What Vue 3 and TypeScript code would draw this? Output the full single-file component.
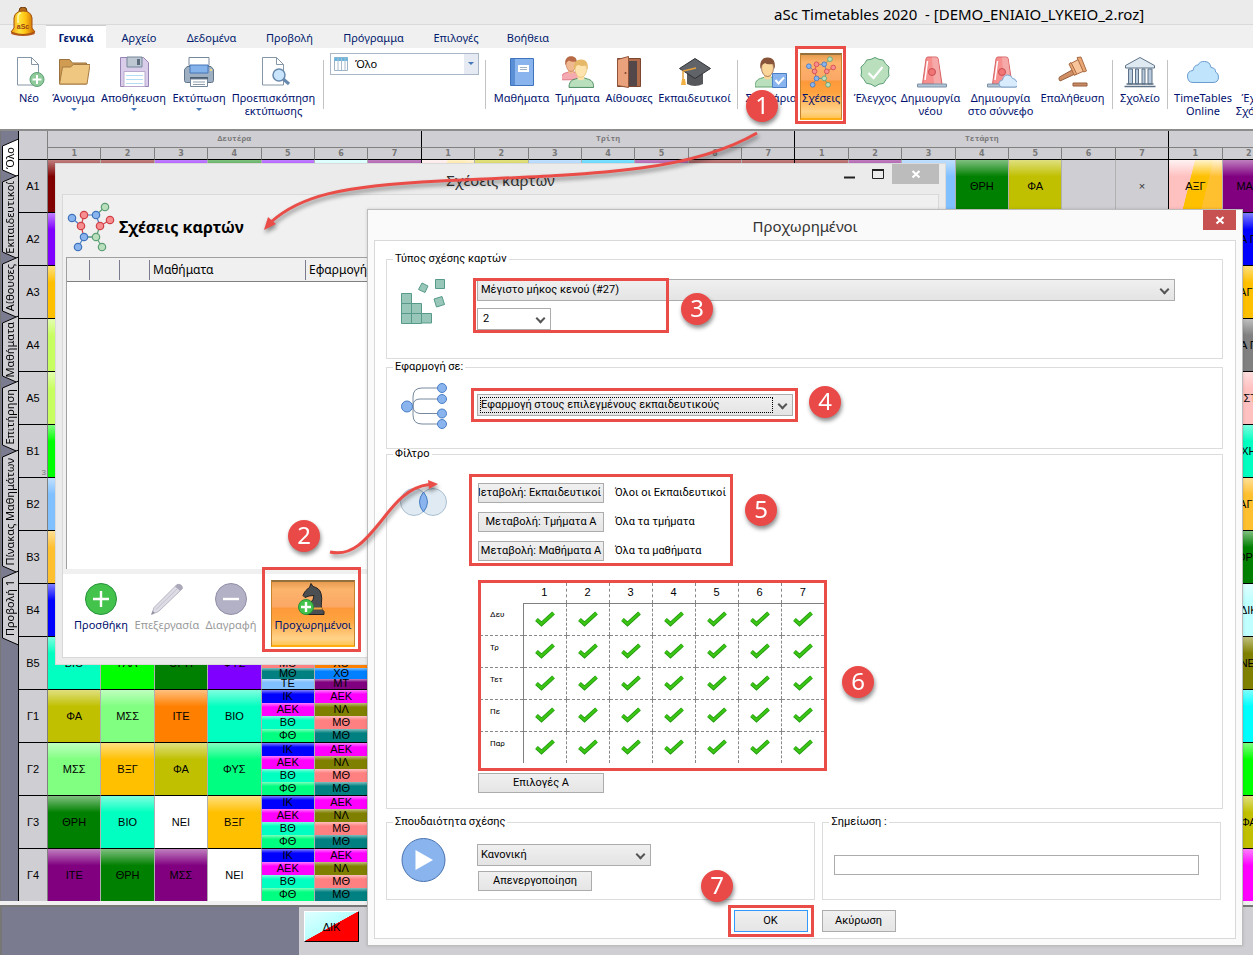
<script setup lang="ts">
import { ref } from 'vue'

type Cell = { t?: string; c?: string; split?: boolean; lines?: [string, string][] }

const palette: Record<string, string> = {
  maroon: '#800000', violet: '#8000ff', green: '#008000', purple: '#800080', gold: '#ffc000',
  olive: '#c0c000', sky: '#80c0ff', cyan: '#00c0ff', ice: '#c0ffff', white: '#ffffff',
  blue: '#0000ff', lime: '#00ff00', mint: '#00ffc0', spring: '#00ff80', pale: '#80ff80',
  orange: '#ff8000', magenta: '#ff00ff', drab: '#808000', salmon: '#ff8080', teal: '#008080',
  azure: '#0080ff', amber: '#ffc030', grass: '#c8ff60', grey: '#808080', pink: '#ffc0c0', aqua: '#00ffff',
}

const menu = ['Γενικά', 'Αρχείο', 'Δεδομένα', 'Προβολή', 'Πρόγραμμα', 'Επιλογές', 'Βοήθεια']

const sideTabs = [
  { label: 'Όλο', h: 36 },
  { label: 'Εκπαιδευτικοί', h: 82 },
  { label: 'Αίθουσες', h: 59 },
  { label: 'Μαθήματα', h: 65 },
  { label: 'Επιτήρηση', h: 69 },
  { label: 'Πίνακας Μαθημάτων', h: 121 },
  { label: 'Προβολή 1', h: 72 },
]

const c = (c?: string, t?: string): Cell => ({ c, t })
const ik: Cell = { lines: [['ΙΚ', 'blue'], ['ΑΕΚ', 'magenta'], ['ΒΘ', 'mint'], ['ΦΘ', 'spring']] }
const aek: Cell = { lines: [['ΑΕΚ', 'magenta'], ['ΝΛ', 'drab'], ['ΜΘ', 'salmon'], ['ΜΘ', 'teal']] }

function row(label: string, start: Cell[], end: Cell[], note = '') {
  const fill: Cell[] = Array.from({ length: 21 - start.length }, () => ({}))
  return { label, note, cells: [...start, ...fill, ...end] }
}

const rows = [
  row('Α1', [
    c('maroon'), c('maroon'), c('violet'), c('green'), c('violet'), c('ice'), c('purple'),
    { split: true }, c('olive'), c('sky'), c('cyan'), c('purple'), c('maroon'), c('maroon'),
    c('maroon'), c('purple'), c('sky'), c('green', 'ΘΡΗ'), c('olive', 'ΦΑ'), {}, { t: '×' },
  ], [{ split: true, t: 'ΑΞΓ' }, c('purple', 'ΜΑΘ')]),
  row('Α2', [c('violet')], [{}, c('blue', 'Α Π')]),
  row('Α3', [c('gold')], [{}, c('gold', 'ΑΓΓ')]),
  row('Α4', [c('grass')], [{}, c('grey', 'Α Π')]),
  row('Α5', [c('grass')], [{}, c('pink', 'ΙΣΤ')]),
  row('Β1', [c('lime')], [{}, c('mint', 'ΧΗ')], '3'),
  row('Β2', [c('sky')], [{}, c('amber', 'ΑΓΓ')]),
  row('Β3', [c('amber')], [{}, c('green', 'ΘΡΗ')]),
  row('Β4', [c('blue')], [{}, c('ice', 'ΔΙΚ')]),
  row('Β5', [
    c('mint', 'ΒΙΟ'), c('lime', 'ΓΛΛ'), c('green', 'ΘΡΗ'), c('violet', 'ΦΥΣ'),
    { lines: [['', 'blue'], ['', 'magenta'], ['ΜΘ', 'salmon'], ['ΜΘ', 'teal'], ['ΤΕ', 'sky']] },
    { lines: [['', 'magenta'], ['', 'drab'], ['ΧΘ', 'orange'], ['ΧΘ', 'azure'], ['ΜΤ', 'purple']] },
  ], [{}, c('drab', 'ΝΕΙ')]),
  row('Γ1', [c('olive', 'ΦΑ'), c('pale', 'ΜΣΣ'), c('orange', 'ΙΤΕ'), c('mint', 'ΒΙΟ'), ik, aek], [{}, c('aqua')]),
  row('Γ2', [c('pale', 'ΜΣΣ'), c('gold', 'ΒΞΓ'), c('olive', 'ΦΑ'), c('spring', 'ΦΥΣ'), ik, aek], [{}, c('lime')]),
  row('Γ3', [c('green', 'ΘΡΗ'), c('mint', 'ΒΙΟ'), c('white', 'ΝΕΙ'), c('gold', 'ΒΞΓ'), ik, aek], [{}, c('olive', 'ΦΑ')]),
  row('Γ4', [c('purple', 'ΙΤΕ'), c('green', 'ΘΡΗ'), c('purple', 'ΜΣΣ'), c('white', 'ΝΕΙ'), ik, aek], [{}, c('magenta')]),
]
const periods = [1, 2, 3, 4, 5, 6, 7, 1, 2, 3, 4, 5, 6, 7, 1, 2, 3, 4, 5, 6, 7, 1, 2]
const days = ['Δευ', 'Τρ', 'Τετ', 'Πε', 'Παρ']

const person = (x: number, hair: string, skin: string, shirt: string, edge: string) =>
  `<g transform="translate(${x} 0)"><path d="M0 31c0-5 2-8 7-9l3-1 6 0 3 1c5 1 7 4 7 9z" fill="${shirt}" stroke="${edge}"/><path d="M9 18h7v4q-3.500 3-7 0z" fill="${skin}"/><ellipse cx="12.500" cy="12" rx="6" ry="8.500" fill="${skin}" stroke="${hair}" stroke-width=".7"/><path d="M5.500 13C4 5 8 1 13 1.500c5 0 8 4 6.500 11.500l-1.500-5q-6 1-8-1l-3 2z" fill="${hair}"/></g>`

const siren = `<path d="M7.500 28 11 3q.3-2 2-2h8q2 0 2.200 2L27 28z" fill="#f78f8f" stroke="#d66466"/><path d="M17 1.500h4q1.700 0 2 2L26 28h-7z" fill="#f5a9a9"/><path d="m10 24 2.500-19" stroke="#fff" stroke-width="1.500"/><circle cx="17" cy="16" r="3.500" fill="#f17575" stroke="#c84f52"/><path d="M2.500 28h29v3h-29z" fill="#b2c4d5" stroke="#7f94a8"/>`
const molecule = `<g stroke-width="1.200" fill="none"><path d="M72 215l9 8M84 212h12l4 11M84 234h12" stroke="#4a7fc5"/><path d="M96 212l9-8M84 234h12l6 10M96 234l4-11" stroke="#5c9f75"/><path d="M84 212l-3 11 3 11M100 223l10-6" stroke="#d0474c"/><path d="M84 234l-6 10" stroke="#4a7fc5"/><g fill="#8ab4ee" stroke="#3f73bd"><circle cx="72" cy="215" r="3.700"/><circle cx="96" cy="212" r="3.700"/><circle cx="84" cy="234" r="3.700"/><circle cx="78" cy="244" r="3.700"/></g><g fill="#f78f90" stroke="#cf4046"><circle cx="84" cy="212" r="3.700"/><circle cx="81" cy="223" r="3.700"/><circle cx="100" cy="223" r="3.700"/><circle cx="110" cy="217" r="3.700"/></g><g fill="#b9dfbd" stroke="#5c9f75"><circle cx="105" cy="204" r="3.700"/><circle cx="96" cy="234" r="3.700"/><circle cx="102" cy="244" r="3.700"/></g></g>`
const page = `<path d="M4.500 1.500h14l7 7v20.500h-21z" fill="#fff" stroke="#8597a6"/><path d="M18.500 1.500v7h7" fill="none" stroke="#8597a6"/>`

const icons: Record<string, string> = {
  new: page + `<circle cx="24" cy="23.500" r="7" fill="#8fcb9a" stroke="#5c9f75"/><path d="M24 19v9M19.500 23.500h9" stroke="#fff" stroke-width="2"/>`,
  open: `<path d="M1.500 28V3.500h10l3 3.500h14v21z" fill="#cf9c52" stroke="#9a713d"/><path d="m1.500 28 3-17h8l3-2.500h16.500l-3 19.500z" fill="#efc780" stroke="#a67b45"/>`,
  save: `<path d="M2.500 1.500h23l5 5v24h-28z" fill="#d9cdea" stroke="#9884b4"/><path d="M9 1h15v10H9z" fill="#bcc7d2" stroke="#74869a"/><path d="M19 3h3v6h-3z" fill="#5c6c7c"/><path d="M6 15.500h21v15H6z" fill="#fff" stroke="#b9a9cf"/><path d="M8 19.500h17M8 23.500h17M8 27.500h17" stroke="#b3dcf5"/>`,
  print: `<path d="M6 1.500h20v8H6z" fill="#fff" stroke="#74869a"/><path d="M4 10.500h24l2.500 3v11q0 2-2 2h-25q-2 0-2-2v-11z" fill="#9dafc1" stroke="#61758a"/><path d="M7 9h18v8H7z" fill="#84b2ea" stroke="#4677b8"/><path d="M7 21h18v2H7z" fill="#4c5d70"/><path d="M7.500 23h17v7.500h-17z" fill="#fff" stroke="#74869a"/><path d="M10 26h12M10 28.500h12" stroke="#8c9bab"/><circle cx="28" cy="14" r="1" fill="#fbe27a"/>`,
  preview: page + `<path d="m24 22 7 6" stroke="#6789ae" stroke-width="3"/><circle cx="21" cy="19" r="6" fill="#c8e5fb" stroke="#6789ae" stroke-width="1.500"/>`,
  book: `<path d="M4.500 2.500h23v27h-23z" fill="#8ab4ee" stroke="#3f73bd"/><path d="M5 3h4v26H5z" fill="#5a8fd6"/><path d="M12 9h11v7H12z" fill="#fff"/><path d="M14 11.500h7M14 13.500h7" stroke="#9fb0c4"/>`,
  people: `<g transform="translate(-1 -1) scale(.8)">` + person(0, '#b86a46', '#f0b98f', '#f5a9b0', '#d66476') + `</g>` + `<g transform="translate(7 2) scale(.95)">` + person(0, '#e5b967', '#fde3ae', '#b9dfbd', '#4a8a60') + `</g>`,
  door: `<path d="M4.500 2.500h23v28h-23z" fill="#b06c4b" stroke="#7c452f"/><path d="M9 5h15v25H9z" fill="#54474a"/><path d="M4.500 3.500 15.500.500v31l-11-2z" fill="#eaa27c" stroke="#8f5338"/><circle cx="12.500" cy="17" r="1" fill="#7c452f"/>`,
  cap: `<path d="M8 16v12q8 4 16 0V16l-8 6z" fill="#55575b"/><path d="m.5 12.500 15.500-10 15.500 10-15.500 10z" fill="#606469" stroke="#303236"/><path d="m17 12-13 3v9" fill="none" stroke="#e8a33d" stroke-width="1.500"/><path d="M3 23h3l1 6H2z" fill="#f3b042"/>`,
  seminar: person(0, '#875339', '#fbd69b', '#b9dfbd', '#66a575') + `<path d="M17.500 17.500h14v14h-14z" fill="#8ab4ee" stroke="#4a7fc5"/><path d="m20.500 24 3 3.500 5.500-6" fill="none" stroke="#fff" stroke-width="2"/>`,
  check: `<path d="m16 1.500 4 1.800 4.300.7 2.200 3.700L30 11l-.5 5 .5 4-3 3.600-2.400 3.700-4.600.9-4 2.300-4-2.300-4.600-.9L5 23.600 2 20l.5-4-.5-5 3.500-3.300L7.700 4l4.300-.7z" fill="#b9dfbd" stroke="#5c9f75"/><path d="m9.500 17 5 5 9-11" fill="none" stroke="#fff" stroke-width="2.200"/>`,
  siren,
  sirencloud: siren + `<path d="M17 31q-3 0-3-3.500 0-3 3.500-3.500 1-5 5-5 4 0 5 3.500 3 0 3.500 2.500 2.500 1 2 3.500-.5 2.500-3 2.500z" fill="#d9ecfd" stroke="#7fa4cb"/>`,
  gavel: `<path d="m15 14 3 4-15 7q-2-2-.5-4z" fill="#cf8e63" stroke="#96603f"/><path d="m13 8 9-5 5 12-9 4z" fill="#f8c49a" stroke="#a96c45"/><path d="m20 1.500 4-.5 5.500 14-3 1zM12 8l2-1.500 5.500 11-2 2z" fill="#eaa774" stroke="#a96c45"/><path d="M16 27h14v3H16z" fill="#c98a63" stroke="#96603f"/>`,
  school: `<path d="M1.500 9.500 16 1.500l14.500 8v2.500h-29z" fill="#dfe9f2" stroke="#5e7287"/><path d="M4.500 13h4v15h-4zM11.500 13h3v15h-3zM18 13h3v15h-3zM24 13h4v15h-4z" fill="#b8cadb" stroke="#5e7287"/><path d="M2.500 28h27M.500 30.500h31" stroke="#5e7287" stroke-width="1.500"/>`,
  cloud: `<path d="M6 26.500q-5.500 0-5.500-6.500 0-5 5.500-5.500Q7 9 11 9q2-4 6.500-3.500 5.500 0 6.500 6 5 .5 4.500 4.500 3 1 3 5 0 5.500-5.500 5.500z" fill="#c0e4fb" stroke="#6b9cd0"/>`,
}

const g1 = [{ n: 'Νέο', i: 'new' }, { n: 'Άνοιγμα', i: 'open', d: true }, { n: 'Αποθήκευση', i: 'save', d: true },
  { n: 'Εκτύπωση', i: 'print', d: true }, { n: 'Προεπισκόπηση\nεκτύπωσης', i: 'preview' }]
const g2 = [{ n: 'Μαθήματα', i: 'book' }, { n: 'Τμήματα', i: 'people' }, { n: 'Αίθουσες', i: 'door' }, { n: 'Εκπαιδευτικοί', i: 'cap' }]
const g3 = [{ n: 'Έλεγχος', i: 'check' }, { n: 'Δημιουργία\nνέου', i: 'siren' }, { n: 'Δημιουργία\nστο σύννεφο', i: 'sirencloud' }, { n: 'Επαλήθευση', i: 'gavel' }]

const marks = [
  { n: 1, x: 762, y: 106 }, { n: 2, x: 304, y: 536 }, { n: 3, x: 697, y: 309 }, { n: 4, x: 825, y: 402 },
  { n: 5, x: 761, y: 510 }, { n: 6, x: 858, y: 682 }, { n: 7, x: 717, y: 886 },
]
const frames = [[795, 46, 51, 78], [262, 567, 99, 85], [473, 278, 196, 55], [471, 388, 327, 34], [469, 474, 264, 92], [478, 580, 349, 191], [728, 905, 86, 32]]

const note = ref('')
</script>

<template>
  <div class="app">
    <header class="titlebar"><h1>aSc Timetables 2020&nbsp; - [DEMO_ENIAIO_LYKEIO_2.roz]</h1></header>
    <svg class="bell" viewBox="0 0 26 30" aria-hidden="true">
      <defs><linearGradient id="bellfill"><stop offset="0" stop-color="#f39a12" /><stop offset=".35" stop-color="#ffe23c" /><stop offset=".6" stop-color="#ffc412" /><stop offset="1" stop-color="#c65a08" /></linearGradient></defs>
      <ellipse cx="13" cy="26" rx="12" ry="3" fill="#b9571c" />
      <circle cx="13" cy="4" r="4" fill="#b16a1c" stroke="#6f3b10" />
      <path d="M4 21V11Q5 4 13 4t9 7v10l3 4q-12 5-24 0z" fill="url(#bellfill)" stroke="#a3520f" />
      <path d="M8 16v-7q1-3 3-3" fill="none" stroke="#fff9b0" stroke-width="1.500" />
      <text x="13" y="22" text-anchor="middle" class="belltext">aSc</text>
    </svg>
    <nav class="menu">
      <button v-for="(m, i) in menu" :key="m" :class="{ active: i === 0 }">{{ m }}</button>
    </nav>

    <div class="ribbon">
      <button v-for="b in g1" :key="b.n" class="tool">
        <svg viewBox="0 0 32 32" v-html="icons[b.i]" /><span>{{ b.n }}</span><i v-if="b.d" class="drop" />
      </button>
      <hr>
      <label class="view">
        <svg viewBox="0 0 14 14" aria-hidden="true"><path d="M.5.5h13v13H.5z" fill="#fff" stroke="#9db4c8" /><path d="M.5.5h13v3.500H.5z" fill="#67b6e0" /><path d="M4 .5v13M7.500.5v13M11 .5v13" stroke="#a9bccd" /></svg>
        <select aria-label="Προβολή"><option>Όλο</option></select>
        <span class="arrow"><i class="drop" /></span>
      </label>
      <hr>
      <button v-for="b in g2" :key="b.n" class="tool"><svg viewBox="0 0 32 32" v-html="icons[b.i]" /><span>{{ b.n }}</span></button>
      <hr>
      <button class="tool"><svg viewBox="0 0 32 32" v-html="icons.seminar" /><span>Σεμινάρια</span></button>
      <button class="tool pressed"><svg viewBox="67 199 48 50" v-html="molecule" /><span>Σχέσεις</span></button>
      <button v-for="b in g3" :key="b.n" class="tool"><svg viewBox="0 0 32 32" v-html="icons[b.i]" /><span>{{ b.n }}</span></button>
      <hr>
      <button class="tool"><svg viewBox="0 0 32 32" v-html="icons.school" /><span>Σχολείο</span></button>
      <hr>
      <button class="tool"><svg viewBox="0 0 32 32" v-html="icons.cloud" /><span>TimeTables{{ '\n' }}Online</span></button>
      <button class="tool"><svg viewBox="0 0 32 32" /><span>Έχω{{ '\n' }}Σχόλιο</span></button>
    </div>

    <main class="board">
      <div class="side">
        <button v-for="(t, i) in sideTabs" :key="t.label" :class="{ on: i === 0 }" :style="{ height: t.h + 'px' }">
          <svg :viewBox="`0 0 16 ${t.h}`" aria-hidden="true"><polygon :points="`17,-1 1,6 1,${t.h - 6} 17,${t.h + 1}`" /></svg>
          <span>{{ t.label }}</span>
        </button>
      </div>
      <table class="timetable">
        <colgroup><col class="rowhead"><col v-for="n in 23" :key="n"></colgroup>
        <thead>
          <tr class="dayrow"><th rowspan="2" class="corner" /><th colspan="7" class="dayend">Δευτέρα</th><th colspan="7" class="dayend">Τρίτη</th><th colspan="7" class="dayend">Τετάρτη</th><th colspan="2" /></tr>
          <tr class="periods"><th v-for="(p, i) in periods" :key="i" :class="{ dayend: i % 7 === 6 }">{{ p }}</th></tr>
        </thead>
        <tbody>
          <tr v-for="r in rows" :key="r.label">
            <th scope="row">{{ r.label }}<small v-if="r.note">{{ r.note }}</small></th>
            <td v-for="(cell, i) in r.cells" :key="i" :class="{ dayend: i % 7 === 6 }">
              <div v-if="cell.lines" class="stack">
                <div v-for="(l, k) in cell.lines" :key="k" class="lesson" :style="{ backgroundColor: palette[l[1]] }">{{ l[0] }}</div>
              </div>
              <div v-else :class="{ lesson: cell.c, split: cell.split, free: !cell.c && !cell.split }" :style="cell.c ? { backgroundColor: palette[cell.c] } : {}">{{ cell.t }}</div>
            </td>
          </tr>
        </tbody>
      </table>
    </main>
    <footer class="tray">
      <div class="info" />
      <div class="card">ΔΙΚ</div>
      <div class="card" />
    </footer>

    <section class="win relations" aria-label="Σχέσεις καρτών">
      <header>
        <h2>Σχέσεις καρτών</h2>
        <div class="controls">
          <button aria-label="Ελαχιστοποίηση"><svg viewBox="0 0 12 12"><path d="M0 9.500h11" stroke="#222" stroke-width="2" /></svg></button>
          <button aria-label="Μεγιστοποίηση"><svg viewBox="0 0 12 12"><path d="M.5 1.500h11v9H.500z" fill="none" stroke="#222" /><path d="M0 2h12" stroke="#222" stroke-width="2" /></svg></button>
          <button class="close" aria-label="Κλείσιμο"><svg viewBox="0 0 12 12"><path d="m2.500 3 7 6.500m0-6.500-7 6.500" stroke="#fff" stroke-width="2.200" /></svg></button>
        </div>
      </header>
      <div class="inner">
        <div class="heading"><svg viewBox="67 199 48 50" v-html="molecule" /><h3>Σχέσεις καρτών</h3></div>
        <div class="list">
          <div class="listhead"><span /><span /><span /><span>Μαθήματα</span><span>Εφαρμογή</span></div>
        </div>
        <div class="actions">
          <button class="act"><svg viewBox="0 0 32 32"><circle cx="16" cy="16" r="15.500" fill="#44c34c" stroke="#27913a" /><path d="M16 8v16M8 16h16" stroke="#fff" stroke-width="2.400" /></svg>Προσθήκη</button>
          <button class="act" disabled><svg viewBox="0 0 32 32"><path d="m.5 31.500 2.500-7L26 1.500q5-1 5.500 4L7.500 28.500z" fill="#dddbe3" stroke="#b7b5c2" /><path d="m.5 31.500 1.200-3.500 2 1.800z" fill="#8d8b99" /><path d="M26 1.500q5-1 5.500 4l-2.500 2.300-5-4.300z" fill="#aaa8b9" /><path d="M5 26.500 26 6" stroke="#c5c3cf" /></svg>Επεξεργασία</button>
          <button class="act" disabled><svg viewBox="0 0 32 32"><circle cx="16" cy="16" r="15.500" fill="#b3b1c6" stroke="#918fa9" /><path d="M8 16h16" stroke="#fff" stroke-width="2.400" /></svg>Διαγραφή</button>
          <button class="act pressed"><svg viewBox="0 0 32 32"><path d="M10 31.500h17v-3l-2-2c-2-5 1-9-1-16-1-4-4-6-8-7l-2-3-1.500 4c-3 2-5 4-6.500 8l2 2 4-1.500 5-.5-1 4-6 8z" fill="#4c4f52" stroke="#222" /><path d="M15 25.500h10" stroke="#f3a738" stroke-width="2" /><circle cx="9" cy="24" r="7.500" fill="#44c34c" stroke="#27913a" /><path d="M9 19v10M4 24h10" stroke="#fff" stroke-width="2.400" /></svg>Προχωρημένοι</button>
        </div>
      </div>
    </section>

    <section class="win advanced" aria-label="Προχωρημένοι">
      <header>
        <h2>Προχωρημένοι</h2>
        <div class="controls"><button class="close" aria-label="Κλείσιμο"><svg viewBox="0 0 12 12"><path d="m2.500 3 7 6.500m0-6.500-7 6.500" stroke="#fff" stroke-width="2.200" /></svg></button></div>
      </header>
      <form class="inner" @submit.prevent>
        <fieldset class="type">
          <legend>Τύπος σχέσης καρτών</legend>
          <svg class="pic" viewBox="0 0 46 46" aria-hidden="true"><g fill="#98c7b9" stroke="#579a89"><path d="M.5 14.500h10v10H.500zM.5 24.500h10v10H.500zM.5 34.500h10v10H.500zM10.500 24.500h10v10h-10zM10.500 34.500h10v10h-10zM20.500 34.500h10v9.500h-10zM34.500.5h9v9h-9zM21 4l6 3-3 6.500-6.500-3zM33 20l8-2.500 2.500 8-8 2.500z" /></g></svg>
          <div class="fields">
            <span class="combo wide"><select aria-label="Τύπος σχέσης"><option>Μέγιστο μήκος κενού (#27)</option></select></span>
            <span class="combo number"><select aria-label="Μήκος κενού"><option>2</option></select></span>
          </div>
        </fieldset>
        <fieldset class="apply">
          <legend>Εφαρμογή σε:</legend>
          <svg class="pic" viewBox="0 0 46 46" aria-hidden="true"><g fill="none" stroke="#7789a0"><path d="M10 23h2V14q0-9 9-9h16M12 23q0-7 7-7h18M12 23q0 7 7 7.500h18M12 23v9q0 9 9 9h16" /></g><g fill="#8ab4ee" stroke="#4a7fc5"><circle cx="6" cy="23.500" r="5.500" /><circle cx="41" cy="5" r="4.500" /><circle cx="41" cy="16" r="4.500" /><circle cx="41" cy="30.500" r="4.500" /><circle cx="41" cy="41" r="4.500" /></g></svg>
          <span class="combo target"><select aria-label="Εφαρμογή σε"><option>Εφαρμογή στους επιλεγμένους εκπαιδευτικούς</option></select></span>
        </fieldset>
        <fieldset class="filter">
          <legend>Φίλτρο</legend>
          <svg class="pic" viewBox="0 0 48 46" aria-hidden="true"><g fill="#dfeaf2" stroke="#a9bfd2"><circle cx="14" cy="23" r="13.500" /><circle cx="33" cy="23" r="13.500" /></g><path d="M23.500 13q8 10 0 20-8-10 0-20z" fill="#8ab4ee" stroke="#4a7fc5" /></svg>
          <div class="fields">
            <div class="changes">
              <button class="btn clip"><span>Μεταβολή: Εκπαιδευτικοί Α</span></button><span>Όλοι οι Εκπαιδευτικοί</span>
              <button class="btn">Μεταβολή: Τμήματα Α</button><span>Όλα τα τμήματα</span>
              <button class="btn">Μεταβολή: Μαθήματα Α</button><span>Όλα τα μαθήματα</span>
            </div>
            <table class="slots">
              <thead><tr><th /><th v-for="n in 7" :key="n" scope="col">{{ n }}</th></tr></thead>
              <tbody>
                <tr v-for="d in days" :key="d">
                  <th scope="row">{{ d }}</th>
                  <td v-for="n in 7" :key="n"><svg viewBox="0 0 20 16" aria-label="Ναι"><path d="M1.500 8.500 6.500 13 18.500 2" fill="none" stroke="#1f9a10" stroke-width="4" /><path d="M1.500 8.500 6.500 13 18.500 2" fill="none" stroke="#3cc414" stroke-width="2.400" /></svg></td>
                </tr>
              </tbody>
            </table>
            <button class="btn">Επιλογές Α</button>
          </div>
        </fieldset>
        <div class="pair">
          <fieldset class="weight">
            <legend>Σπουδαιότητα σχέσης</legend>
            <svg class="pic" viewBox="0 0 46 46" aria-hidden="true"><circle cx="22.500" cy="23" r="21.500" fill="#8ab4ee" stroke="#4a72ae" /><path d="M14.500 13v20L32 23z" fill="#fff" /></svg>
            <div class="fields">
              <span class="combo level"><select aria-label="Σπουδαιότητα"><option>Κανονική</option></select></span>
              <button class="btn off">Απενεργοποίηση</button>
            </div>
          </fieldset>
          <fieldset class="note">
            <legend>Σημείωση :</legend>
            <input v-model="note" type="text" aria-label="Σημείωση">
          </fieldset>
        </div>
        <div class="confirm"><button class="btn main">OK</button><button class="btn">Ακύρωση</button></div>
      </form>
    </section>

    <svg class="guide" aria-hidden="true">
      <g fill="none" stroke="#ea4c48" stroke-width="3">
        <rect v-for="f in frames" :key="f[0]" :x="f[0] + 1.5" :y="f[1] + 1.5" :width="f[2] - 3" :height="f[3] - 3" />
        <g class="shade">
          <path d="M757 133C690 172 600 174 440 181 340 186 300 196 271 222" />
          <path d="M330 552C352 557 366 540 382 520 395 503 408 487 429 484.500" />
          <path d="M264 230 268 217 276 224zM438 484 428 480 429 489z" fill="#ea4c48" stroke="none" />
        </g>
      </g>
      <g class="shade">
        <template v-for="m in marks" :key="m.n">
          <circle :cx="m.x" :cy="m.y" r="16" fill="#e94947" />
          <text :x="m.x" :y="m.y + 8" text-anchor="middle">{{ m.n }}</text>
        </template>
      </g>
    </svg>
  </div>
</template>

<style>
html, body { margin: 0; }
</style>

<style scoped>
* { box-sizing: border-box; }
.app {
  position: relative; display: flex; flex-direction: column; min-height: 100vh; overflow: hidden;
  background: #cfced3; font: 11px/14px "Noto Sans", "Open Sans", sans-serif; color: #000;
}
h1, h2, h3 { margin: 0; font-weight: 400; }
button, select, input { font: inherit; color: inherit; margin: 0; padding: 0; border: 0; background: none; border-radius: 0; }
svg { display: block; flex: none; }
.titlebar { height: 25px; padding: 4px 0 0 774px; background: #ebebeb; border-bottom: 1px solid #dadada; white-space: nowrap; }
.titlebar h1 { font-size: 15px; line-height: 20px; }
.bell { position: absolute; left: 10px; top: 7px; width: 26px; height: 30px; }
.belltext { font: bold 7px "Liberation Sans", sans-serif; fill: #9a4310; }
.menu { display: grid; grid-template-columns: 60px 66px 79px 77px 91px 74px 70px; height: 23px; padding-left: 46px; background: #f0f0f0; color: #001a6e; }
.menu button { white-space: nowrap; text-align: center; padding-top: 2px; }
.menu .active { background: #fff; font-weight: 700; border-top: 1px solid #ccc; }
.ribbon {
  display: grid; height: 83px; padding: 5px 0 6px 8px; overflow: hidden; background: #fff; border-bottom: 2px solid #8c8c8c; color: #00106e;
  grid-template-columns: 42px 47px 73px 58px 91px 8px 155px 6px 67px 45px 58px 73px 13px 54px 46px 62px 49px 91px 53px 26px 30px 24px 48px 52px;
}
.ribbon hr { width: 1px; height: 49px; margin: 7px auto; border: 0; background: #c3c3c3; }
.tool { display: flex; flex-direction: column; align-items: center; padding-top: 3px; }
.tool svg { width: 32px; height: 32px; margin-bottom: 3px; }
.tool span { white-space: pre; text-align: center; line-height: 13px; }
.drop { width: 0; height: 0; border: 3px solid transparent; border-top-color: #4677b8; border-bottom: 0; margin-top: 4px; }
.pressed { background: linear-gradient(#e79c50, #fcb46c 12%, #fba765 40%, #fd983a 41%, #ffa33e 60%, #ffd48a 90%, #ffc455); border: 1px solid #c5832d; border-top: 2px solid #94703c; border-bottom: 2px solid #ffad12; }
.tool.pressed { height: 67px; margin: 0 2px; padding-top: 1px; }
.view { display: flex; align-items: center; height: 22px; margin: 0 3px; border: 1px solid #a9b7c6; color: #000; }
.view svg { width: 14px; height: 14px; margin: 0 7px 0 3px; }
.view select { flex: 1; appearance: none; height: 20px; min-width: 0; }
.arrow { display: flex; justify-content: center; width: 14px; height: 20px; padding-top: 4px; background: #e5eaf3; }
.board { display: flex; height: 770px; overflow: hidden; border-left: 1px solid #777; }
.side { width: 18px; flex: none; background: #7b7b8f; border-right: 1px solid #000; padding-top: 9px; }
.side button { display: flex; align-items: center; justify-content: center; position: relative; width: 17px; }
.side svg { position: absolute; inset: 0; width: 17px; height: 100%; overflow: visible; }
.side polygon { fill: #cfced3; stroke: #000; }
.side .on polygon { fill: #fff; }
.side span { position: relative; writing-mode: vertical-rl; transform: rotate(180deg); font-size: 11px; line-height: 14px; white-space: nowrap; }
.timetable { table-layout: fixed; width: 1257px; flex: none; border-spacing: 0; font: 11px/13px "Liberation Sans", sans-serif; }
.rowhead { width: 29px; }
.timetable th, .timetable td { padding: 0; border-right: 1px solid #b0b0b0; border-bottom: 1px solid #000; }
.timetable thead th { border-color: #808080; color: #777; height: 12px; font: bold 8px/11px "DejaVu Sans", sans-serif; }
.timetable .dayrow th { height: 17px; font: bold 8px/16px "Liberation Mono", monospace; }
.timetable .corner, .timetable .periods th { border-bottom-color: #000; }
.timetable .dayend, .timetable thead .dayend { border-right-color: #000; }
.timetable tbody tr { height: 53px; }
.timetable tbody th { position: relative; font-weight: 400; border-right-color: #808080; }
.timetable small { position: absolute; right: 1px; bottom: 0; font-size: 8px; line-height: 8px; color: #777; }
.lesson, .split, .free { display: flex; align-items: center; justify-content: center; height: 52px; overflow: hidden; background-image: linear-gradient(rgba(255,255,255,.5), rgba(255,255,255,0) 32%); }
.free { background: none; color: #333; }
.split { background: linear-gradient(rgba(255,255,255,.8), rgba(255,255,255,0) 32%), linear-gradient(104deg, #ffc0c0 39%, #ffc000 40% 67%, #ffc030 68%); }
.stack { display: flex; flex-direction: column; height: 52px; }
.stack .lesson { flex: 1; height: 0; }
.tray { flex: 1; display: flex; gap: 5px; min-height: 50px; margin-top: 4px; border-top: 2px solid #777; border-left: 2px solid #777; box-shadow: 0 -4px #f0f0f0; position: relative; }
.info { width: 297px; background: #7b7b8f; }
.card { display: flex; align-items: center; justify-content: center; width: 55px; height: 31px; margin-top: 4px; border: 1px solid #fff; border-right-color: #000; border-bottom-color: #000; background: linear-gradient(151deg, #e0ffff, #b8ffff 49%, #f00 50%); font-family: "Liberation Sans", sans-serif; }
.card + .card { margin-left: 3px; }

.win { position: absolute; display: flex; flex-direction: column; border: 1px solid #dadada; }
.win header { display: flex; justify-content: center; flex: none; height: 30px; position: relative; }
.win h2 { font-size: 15px; line-height: 32px; color: #333; }
.controls { position: absolute; right: 0; top: 0; display: flex; align-items: flex-start; }
.controls button { display: flex; align-items: center; justify-content: center; width: 28px; height: 20px; }
.controls svg { width: 12px; height: 12px; }
.relations { left: 55px; top: 163px; width: 891px; height: 502px; padding: 0 6px 6px; background: #ebebeb; }
.relations .close { width: 47px; background: #bcbcbc; }
.relations .inner { flex: 1; display: flex; flex-direction: column; border: 1px solid #d9d9d9; background: #f0f0f0; }
.heading { display: flex; align-items: center; gap: 4px; height: 62px; padding: 1px 0 0 4px; }
.heading svg { width: 48px; height: 50px; }
.heading h3 { font-size: 16px; font-weight: 700; line-height: 24px; }
.list { flex: 1; margin-left: 3px; margin-bottom: 5px; border: 1px solid #a0a0a0; border-bottom: 0; background: #fff; }
.listhead { display: grid; grid-template-columns: 22px 30px 30px 156px 1fr; height: 24px; padding: 2px 0; border-bottom: 1px solid #808080; background: #f0f0f0; font-size: 12px; line-height: 20px; }
.listhead span + span { border-left: 1px solid #7b7b8f; padding-left: 3px; }
.actions { display: grid; grid-template-columns: 64px 68px 60px 94px; height: 83px; padding: 6px 0 10px 6px; background: #fff; color: #00106e; }
.act { display: flex; flex-direction: column; align-items: center; gap: 3px; padding-top: 3px; white-space: nowrap; }
.act:disabled { color: #999; }
.act svg { width: 32px; height: 32px; }
.actions .pressed { width: 84px; margin-left: 10px; padding-top: 1px; }

.advanced { left: 367px; right: 10px; top: 209px; height: 737px; padding: 0 6px 6px; background: #fafafa; border-color: #bdbdbd; box-shadow: 0 0 3px rgba(0,0,0,.15); }
.advanced .close { width: 33px; background: #c75050; }
.advanced .inner { flex: 1; border: 1px solid #d9d9d9; background: #fff; padding: 13px 12px 0 11px; font: 11px/14px Roboto, "Noto Sans", sans-serif; }
fieldset { display: flex; align-items: flex-start; min-width: 0; margin: 0; padding: 0 0 0 13px; border: 1px solid #dcdcdc; }
legend { margin-left: -7px; padding: 0 2px; line-height: 10px; white-space: nowrap; }
.pic { width: 48px; height: 46px; margin-right: 29px; }
.fields { display: flex; flex-direction: column; align-items: flex-start; flex: 1; }
.type { height: 105px; margin-bottom: 3px; }
.type .pic, .type .fields { margin-top: 15px; }
.type .fields { gap: 7px; padding-right: 47px; }
.combo { position: relative; display: block; height: 22px; }
.combo::after { content: ""; position: absolute; right: 7px; top: 7px; width: 5px; height: 5px; border: solid #555; border-width: 0 2px 2px 0; transform: rotate(45deg); pointer-events: none; }
.combo select { appearance: none; width: 100%; height: 22px; padding: 0 18px 0 3px; border: 1px solid #acacac; background: linear-gradient(#f0f0f0, #e4e4e4); }
.wide { width: 100%; }
.number { width: 74px; }
.combo.number select { background: #fff; padding-left: 5px; }
.apply { height: 87px; }
.apply .pic { margin-top: 11px; }
.target { width: 316px; margin-top: 22px; }
.target::before { content: ""; position: absolute; inset: 3px 20px 3px 3px; border: 1px dotted #000; pointer-events: none; }
.filter { height: 360px; margin-bottom: 8px; }
.filter .pic { margin-top: 20px; }
.filter .fields { padding: 23px 0 0 1px; }
.changes { display: grid; grid-template-columns: 126px auto; gap: 9px 11px; align-items: center; padding: 1px 0 22px; }
.btn { display: flex; align-items: center; justify-content: center; width: 126px; height: 20px; border: 1px solid #acacac; background: linear-gradient(#f0f0f0, #e5e5e5); white-space: nowrap; }
.clip { overflow: hidden; }
.slots { table-layout: fixed; width: 344px; margin: 0 0 10px 2px; border-spacing: 0; border-collapse: collapse; }
.slots th, .slots td { padding: 0; width: 43px; height: 32px; border: 1px dashed #888; border-top: 0; border-right: 0; }
.slots th:first-child { border-left: 0; }
.slots thead th { height: 20px; vertical-align: top; font: 11px/18px "Liberation Sans", sans-serif; border-bottom: 1px solid #808080; }
.slots thead th:first-child { border-bottom: 0; }
.slots thead th:nth-child(2) { border-left: 0; }
.slots tbody th { padding: 6px 0 0 10px; text-align: left; vertical-align: top; font-weight: 400; font-size: 8px; line-height: 12px; }
.slots tbody td:nth-child(2) { border-left: 1px solid #808080; }
.slots tbody tr:last-child > * { border-bottom: 0; }
.slots svg { width: 20px; height: 16px; margin: 0 auto; }
.pair { display: grid; grid-template-columns: 430fr 399fr; gap: 7px; padding-right: 2px; }
.pair fieldset { height: 83px; }
.weight .pic { margin-top: 10px; }
.weight .fields { gap: 5px; padding-top: 17px; }
.level { width: 174px; }
.off { width: 114px; margin-left: 1px; }
.note { padding-right: 21px; padding-left: 11px; }
.note legend { margin-left: -5px; }
.note input { width: 100%; height: 20px; margin-top: 28px; border: 1px solid #acacac; background: #fff; }
.confirm { display: flex; justify-content: center; gap: 14px; margin: 10px 0 0 20px; }
.confirm .btn { width: 74px; height: 22px; }
.confirm .main { border-color: #3399ff; }

.guide { position: absolute; left: 0; top: 0; width: 100%; height: 100%; pointer-events: none; }
.guide text { font: 24px "Noto Sans", sans-serif; fill: #fff; }
.shade { filter: drop-shadow(1px 3px 2px rgba(0,0,0,.45)); }
</style>
